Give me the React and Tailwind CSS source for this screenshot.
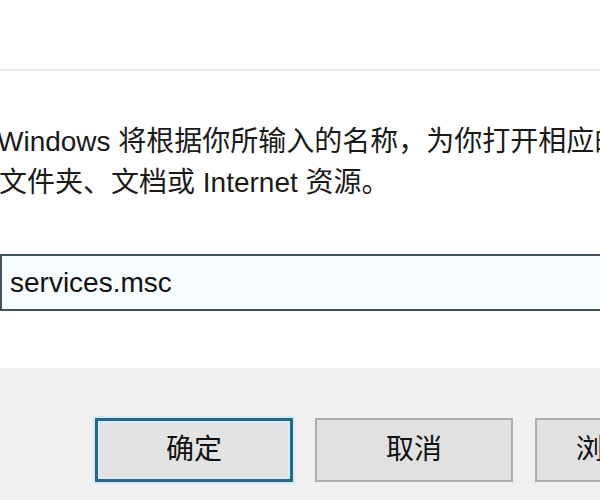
import React from 'react'

const font = { fontFamily: '"Liberation Sans", "Noto Sans CJK SC", sans-serif' }

function DialogButton({ label, primary }) {
  return (
    <div
      className={
        primary
          ? 'w-[198px] h-[64px] shrink-0 border-[3px] border-[#2c6585] bg-[#e3e3e3] shadow-[0_0_0_2px_#d4ecfa,inset_0_0_0_2px_#d6eefb] flex items-center justify-center'
          : 'w-[198px] h-[64px] shrink-0 border-2 border-[#adadad] bg-[#e1e1e1] flex items-center justify-center'
      }
    >
      <span className="text-[28px] leading-none text-[#111]">{label}</span>
    </div>
  )
}

export default function App() {
  return (
    <div className="w-[600px] h-[500px] overflow-hidden bg-white flex flex-col" style={font}>
      {/* 上部のタイトル区切り */}
      <div className="h-[69px] shrink-0 bg-white" />
      <div className="h-[2px] shrink-0 bg-[#e8e8e8]" />

      {/* 説明文と入力欄 */}
      <div className="h-[297px] shrink-0 bg-white flex flex-col">
        <div className="mt-[50px] text-[28px] leading-[41px] text-[#1a1a1a] whitespace-nowrap">
          <div className="ml-[-3px]">Windows 将根据你所输入的名称，为你打开相应的程序、</div>
          <div className="ml-[-1px]">文件夹、文档或 Internet 资源。</div>
        </div>
        <div className="mt-[51px] w-[640px] h-[57px] border-2 border-[#44545c] bg-[#f8fdff] flex items-center pl-[8px]">
          <span className="text-[28px] leading-none text-[#111]">services.msc</span>
        </div>
      </div>

      {/* 下部のボタン領域 */}
      <div className="flex-1 bg-[#f0f0f0] pt-[50px] pl-[95px] flex gap-[22px]">
        <DialogButton label="确定" primary />
        <DialogButton label="取消" />
        <DialogButton label="浏览(B)..." />
      </div>
    </div>
  )
}
